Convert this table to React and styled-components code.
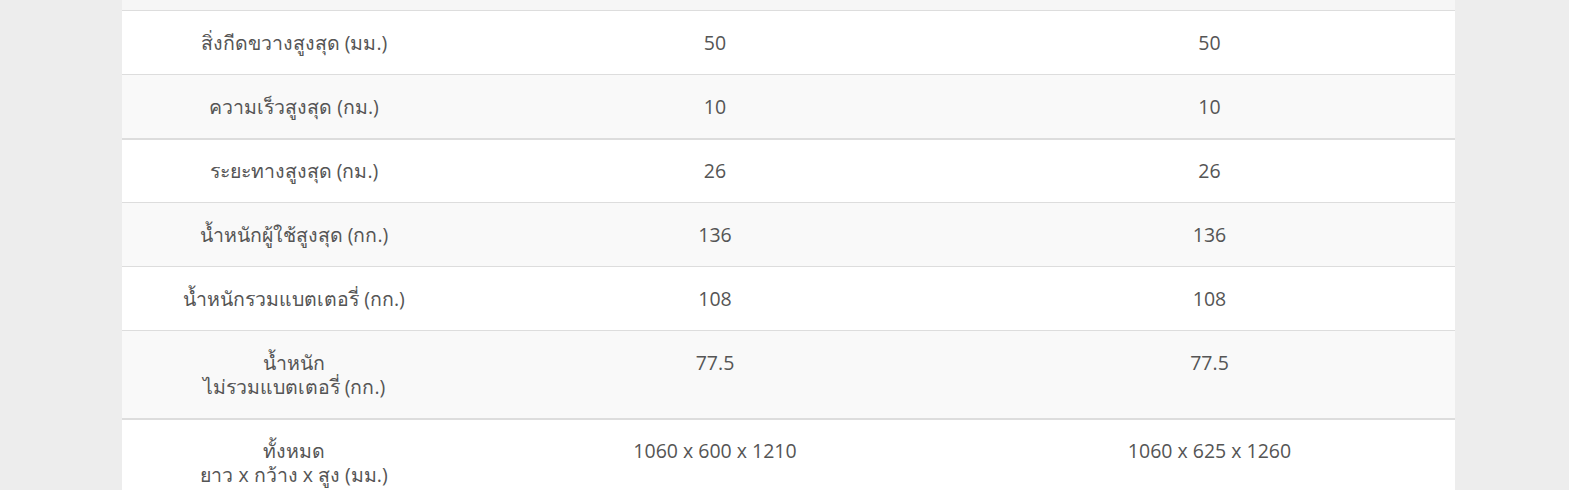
import React from "react";
import styled, { createGlobalStyle } from "styled-components";

const GlobalStyle = createGlobalStyle`
  body {
    margin: 0;
    background: #ededed;
    font-family: "Open Sans", "Noto Sans", sans-serif;
  }
`;

const Page = styled.div`
  width: 1569px;
  height: 490px;
  overflow: hidden;
  padding-left: 122px;
  box-sizing: border-box;
`;

const Table = styled.div`
  width: 1333px;
  background: #fff;
`;

const Row = styled.div`
  display: grid;
  grid-template-columns: 344px 498px 491px;
  background: ${(props) => (props.striped ? "#f9f9f9" : "#ffffff")};
  border-top: ${(props) => (props.thick ? "2px" : "1px")} solid #dddddd;
`;

const Stub = styled.div`
  height: 10px;
  background: #f6f6f6;
`;

const Cell = styled.div`
  padding: ${(props) => (props.thick ? "19px" : "20px")} 10px 19px;
  text-align: center;
  font-size: 19.5px;
  line-height: 24px;
  color: #555555;
`;

const specs = [
  { label: ["สิ่งกีดขวางสูงสุด (มม.)"], a: "50", b: "50" },
  { label: ["ความเร็วสูงสุด (กม.)"], a: "10", b: "10" },
  { label: ["ระยะทางสูงสุด (กม.)"], a: "26", b: "26", thick: true },
  { label: ["น้ำหนักผู้ใช้สูงสุด (กก.)"], a: "136", b: "136" },
  { label: ["น้ำหนักรวมแบตเตอรี่ (กก.)"], a: "108", b: "108" },
  { label: ["น้ำหนัก", "ไม่รวมแบตเตอรี่ (กก.)"], a: "77.5", b: "77.5" },
  {
    label: ["ทั้งหมด", "ยาว x กว้าง x สูง (มม.)"],
    a: "1060 x 600 x 1210",
    b: "1060 x 625 x 1260",
    thick: true,
  },
];

export default function App() {
  return (
    <>
      <GlobalStyle />
      <Page>
        <Table>
          <Stub />
          {specs.map((s, i) => (
            <Row key={i} striped={i % 2 === 1} thick={s.thick}>
              <Cell thick={s.thick}>
                {s.label.map((l, j) => (
                  <div key={j}>{l}</div>
                ))}
              </Cell>
              <Cell thick={s.thick}>{s.a}</Cell>
              <Cell thick={s.thick}>{s.b}</Cell>
            </Row>
          ))}
        </Table>
      </Page>
    </>
  );
}
